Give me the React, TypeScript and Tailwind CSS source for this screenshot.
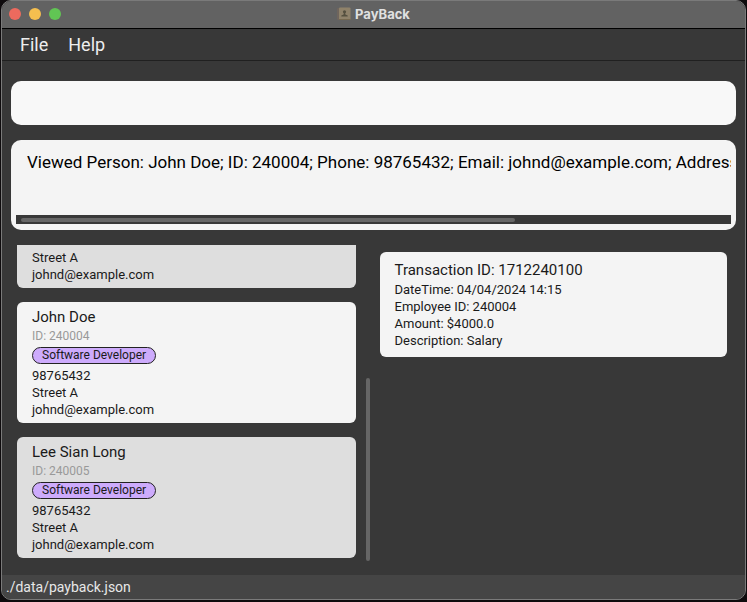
type Person = {
  key: number;
  name?: string;
  id?: string;
  tag?: string;
  phone?: string;
  address: string;
  email: string;
};

const people: Person[] = [
  { key: 3, address: "Street A", email: "johnd@example.com" },
  { key: 4, name: "John Doe", id: "240004", tag: "Software Developer", phone: "98765432", address: "Street A", email: "johnd@example.com" },
  { key: 5, name: "Lee Sian Long", id: "240005", tag: "Software Developer", phone: "98765432", address: "Street A", email: "johnd@example.com" },
];

const resultText =
  "Viewed Person: John Doe; ID: 240004; Phone: 98765432; Email: johnd@example.com; Address";

function AppIcon() {
  return (
    <svg width="14" height="14" viewBox="0 0 14 14" aria-hidden="true">
      <rect x="0" y="1" width="3" height="12" rx="1" fill="#6f655d" />
      <rect x="2" y="0.5" width="11.5" height="12.5" rx="1" fill="#8f826a" />
      <rect x="2" y="12" width="11.5" height="1" fill="#77694f" />
      <circle cx="7.5" cy="4.8" r="1.6" fill="#55503f" />
      <path d="M6.900 6h1.200l.3 1.600 2.300.8V9.500h-6.400V8.400l2.300-.8z" fill="#55503f" />
    </svg>
  );
}

function TitleBar() {
  return (
    <header className="grid h-[27px] shrink-0 grid-cols-[1fr_auto_1fr] items-center bg-[#626262] px-[7px] pb-[2px]">
      <div className="flex gap-2">
        <button aria-label="Close" className="size-3 rounded-full bg-[#ed6a5e]" />
        <button aria-label="Minimize" className="size-3 rounded-full bg-[#f5bf4f]" />
        <button aria-label="Zoom" className="size-3 rounded-full bg-[#61c554]" />
      </div>
      <h1 className="flex items-center gap-1 font-['Inter','Liberation_Sans',sans-serif] text-[13px] leading-4 font-bold text-[#e0e0e0]">
        <AppIcon />
        PayBack
      </h1>
    </header>
  );
}

function PersonCard({ person, shaded }: { person: Person; shaded: boolean }) {
  const scrolledPast = !person.name;
  return (
    <li
      className={`shrink-0 px-[15px] pb-[5px] text-[13px] leading-[17px] ${scrolledPast ? "rounded-b-md pt-1" : "rounded-md pt-[5px]"} ${shaded ? "bg-[#dedede]" : "bg-[#f4f4f4]"}`}
    >
      {!scrolledPast && (
        <>
          <h2 className="text-[15px] leading-[21px]">{person.name}</h2>
          <p className="text-xs leading-[17px] text-[#999]">ID: {person.id}</p>
          <div className="flex pt-[2px] pb-[3px]">
            <span className="rounded-full border border-[#222] bg-[#cdabfc] px-[9px] text-xs leading-[15px]">{person.tag}</span>
          </div>
          <p>{person.phone}</p>
        </>
      )}
      <p>{person.address}</p>
      <p>{person.email}</p>
    </li>
  );
}

export default function App() {
  return (
    <div className="h-screen bg-[#0e0b0d] px-px pb-[2px] font-['Roboto','Liberation_Sans',sans-serif] text-[#1a1a1a]">
      <div className="flex h-full flex-col overflow-hidden rounded-[10px] border border-[#7a7a7a] bg-[#383838]">
        <TitleBar />
        <nav className="flex h-[33px] shrink-0 items-center gap-5 border-y border-t-black border-b-[#202020] px-[18px] text-lg leading-6 text-[#eee]">
          <button>File</button>
          <button>Help</button>
        </nav>
        <main className="flex min-h-0 flex-1 flex-col gap-[15px] px-[9px] pt-5 pb-[10px]">
          <input
            aria-label="Command"
            className="h-11 w-full shrink-0 rounded-[10px] bg-[#f8f8f8] px-4 text-lg outline-none"
          />
          <section className="flex shrink-0 flex-col rounded-[10px] bg-[#f4f4f4] px-[5px] pt-[5px] pb-[6px]">
            <textarea
              aria-label="Result"
              readOnly
              rows={1}
              wrap="off"
              value={resultText}
              className="block h-[70px] w-full resize-none overflow-hidden pt-[5px] pl-[11px] text-[17px] leading-6 whitespace-pre text-black outline-none"
            />
            <div className="h-[9px] bg-[#383838] px-[5px] py-[3px]">
              <div className="h-1 w-[70%] rounded-full bg-[#666]" />
            </div>
          </section>
          <div className="grid min-h-0 flex-1 grid-cols-2">
            <section className="flex min-h-0 gap-[10px] pr-1 pl-[6px]">
              <ul className="flex min-w-0 flex-1 flex-col justify-end gap-[14px] overflow-hidden pb-[7px]">
                {people.map((person, i) => (
                  <PersonCard key={person.key} person={person} shaded={i % 2 === 0} />
                ))}
              </ul>
              <div className="flex w-1 flex-col justify-end pb-1">
                <div className="h-[58%] rounded-full bg-[#666]" />
              </div>
            </section>
            <ul className="pt-[7px] pr-[9px] pl-[6px]">
              <li className="rounded-md bg-[#f4f4f4] px-[15px] py-2 text-[13px] leading-[17px]">
                <h2 className="text-[15px] leading-[21px]">Transaction ID: 1712240100</h2>
                <p>DateTime: 04/04/2024 14:15</p>
                <p>Employee ID: 240004</p>
                <p>Amount: $4000.0</p>
                <p>Description: Salary</p>
              </li>
            </ul>
          </div>
        </main>
        <footer className="h-6 shrink-0 bg-[#454545] px-1 text-sm leading-6 text-[#e8e8e8]">./data/payback.json</footer>
      </div>
    </div>
  );
}
